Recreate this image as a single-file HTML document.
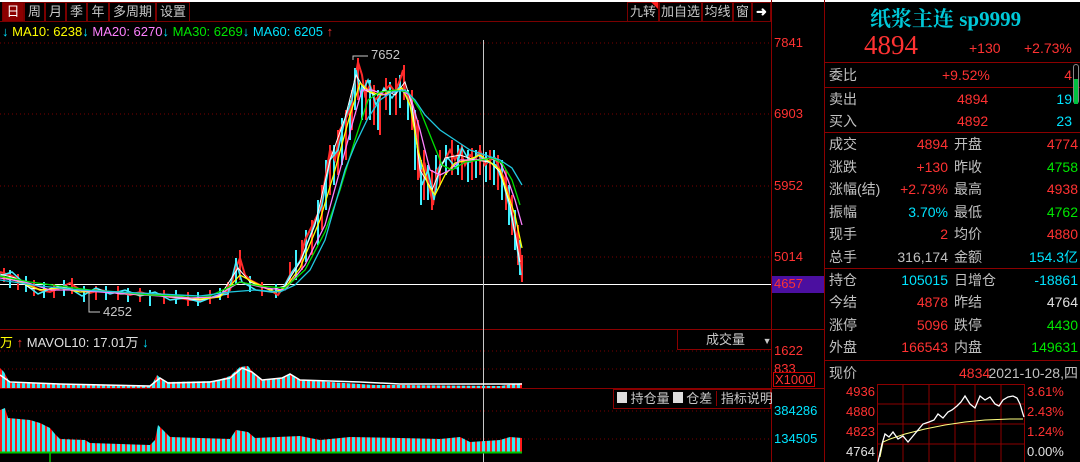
<!DOCTYPE html>
<html><head><meta charset="utf-8"><style>
*{margin:0;padding:0;box-sizing:border-box}
body{width:1080px;height:462px;background:#000;overflow:hidden;position:relative;font-family:"Liberation Sans","Noto Sans CJK SC",sans-serif;font-size:13px;color:#c0c0c0}
.a{position:absolute;white-space:nowrap}
.r{color:#ff3232}.c{color:#00e4ff}.g{color:#00e600}.w{color:#e0e0e0}.y{color:#ffff00}.m{color:#ff80ff}
.tb{position:absolute;top:2px;height:20px;border:1px solid #7a0000;color:#c8c8c8;font-size:13px;line-height:18px;text-align:center}
.row{position:absolute;left:829px;width:249px;height:22px;line-height:22px;font-size:14px}
.row span{position:absolute}
</style></head><body>
<div class="a" style="left:0;top:0;width:1080px;height:2px;background:#fff"></div>
<div class="tb" style="left:2px;width:22px;background:#8b0000;color:#fff">日</div>
<div class="tb" style="left:24px;width:21px">周</div>
<div class="tb" style="left:45px;width:21px">月</div>
<div class="tb" style="left:66px;width:21px">季</div>
<div class="tb" style="left:87px;width:22px">年</div>
<div class="tb" style="left:109px;width:47px">多周期</div>
<div class="tb" style="left:156px;width:34px">设置</div>
<div class="tb" style="left:627px;width:32px">九转</div>
<div class="a" style="left:651px;top:2px;width:0;height:0;border-left:7px solid transparent;border-top:7px solid #ff2020"></div>
<div class="tb" style="left:659px;width:43px">加自选</div>
<div class="tb" style="left:702px;width:31px">均线</div>
<div class="tb" style="left:733px;width:19px">窗</div>
<div class="tb" style="left:752px;width:19px;font-weight:bold;color:#fff">➜</div>
<div class="a" style="left:0;top:21px;width:771px;height:1px;background:#7a0000"></div>
<div class="a" style="left:2px;top:24px;font-size:13px"><span class="c">↓</span> <span class="y">MA10: 6238</span><span class="c">↓</span> <span class="m">MA20: 6270</span><span class="c">↓</span> <span class="g">MA30: 6269</span><span class="c">↓</span> <span class="c">MA60: 6205</span> <span class="r">↑</span></div>
<div class="a" style="left:771px;top:0;width:1px;height:462px;background:#8b0000"></div>
<div class="a" style="left:824px;top:0;width:1px;height:462px;background:#8b0000"></div>
<svg class="a" style="left:0;top:0" width="825" height="462">
<defs><pattern id="st" width="5" height="10" patternUnits="userSpaceOnUse"><rect width="2" height="10" fill="#ff1a1a"/><rect x="2" width="3" height="10" fill="#38e8f0"/></pattern></defs>
<g stroke="#7a0000" stroke-dasharray="1,3">
<line x1="0" y1="43" x2="771" y2="43"/><line x1="0" y1="114" x2="771" y2="114"/><line x1="0" y1="186" x2="771" y2="186"/><line x1="0" y1="257" x2="771" y2="257"/>
<line x1="0" y1="351" x2="771" y2="351"/><line x1="0" y1="369" x2="771" y2="369"/><line x1="0" y1="411" x2="771" y2="411"/><line x1="0" y1="439" x2="771" y2="439"/>
</g>
<line x1="0" y1="329.5" x2="825" y2="329.5" stroke="#8b0000"/>
<line x1="0" y1="388.5" x2="825" y2="388.5" stroke="#8b0000"/>
<line x1="0" y1="284.5" x2="771" y2="284.5" stroke="#fff"/>
<line x1="483.5" y1="40" x2="483.5" y2="462" stroke="#c8c8c8"/>
<!-- candle wicks -->
<path stroke="#ff2a2a" stroke-width="2" d="M4 268V282M18 274V290M34 280V296M54 284V298M72 278V294M96 286V300M118 286V300M140 288V302M164 290V304M188 292V306M210 290V304M228 282V298M240 250V280M262 282V296M290 262V284M302 240V270M312 220V255M322 185V230M330 145V195M338 130V175M346 110V160M352 90V130M358 58V100M366 80V120M374 85V125M380 95V135M386 78V110M396 78V115M404 65V100M412 90V130M418 120V180M424 150V200M432 170V210M440 150V185M452 140V175M462 145V180M472 148V180M480 145V175M490 150V180M498 155V190M506 170V210M512 195V235M518 225V265M522 255V282"/>
<path stroke="#40f0ff" stroke-width="2" d="M10 270V288M26 276V292M44 282V298M64 280V296M84 286V302M106 286V300M128 288V302M150 290V306M176 290V304M198 292V306M220 288V300M236 258V284M250 276V292M276 284V298M296 250V280M306 230V262M318 200V245M326 160V210M334 145V185M342 118V165M350 100V140M355 68V110M362 85V120M370 80V120M378 90V130M390 82V115M400 75V108M408 90V120M415 110V170M421 160V205M428 165V200M436 155V190M446 145V175M458 145V175M468 150V182M476 150V178M486 152V182M494 150V185M502 160V200M509 185V225M515 210V250M520 240V275"/>
<polyline fill="none" stroke="#ff2a2a" stroke-width="2" points="0,272 10,275 20,280 30,285 40,290 50,292 60,288 70,283 80,290 90,293 100,290 110,292 120,292 130,295 140,292 150,295 160,294 170,297 180,298 190,300 200,300 210,298 220,296 230,290 235,270 240,258 245,275 250,280 260,285 270,290 278,295 285,285 290,275 300,262 305,240 310,230 320,210 325,180 330,150 335,160 340,130 345,120 350,110 355,80 358,62 362,75 365,95 370,85 375,100 380,95 385,90 390,85 395,92 400,80 403,70 405,90 410,100 415,120 418,140 420,175 425,165 430,190 433,205 437,170 445,160 450,150 455,160 460,150 465,165 470,155 475,160 480,150 485,165 490,160 495,158 500,170 505,180 510,200 515,230 520,250 522,280"/>
<polyline fill="none" stroke="#40f0ff" stroke-width="1.5" points="0,276 12,272 25,284 38,294 52,288 66,286 82,296 96,288 110,294 125,290 140,296 155,292 170,300 185,298 200,302 215,296 228,294 236,262 242,282 256,290 272,292 282,290 292,272 302,258 310,236 322,205 330,160 338,150 346,115 352,100 356,70 361,95 368,80 376,105 384,88 392,98 400,86 406,96 412,110 418,150 422,185 428,170 434,200 440,165 448,158 456,168 462,148 470,162 478,155 488,162 496,165 504,185 510,210 516,240 521,275"/>
<polyline fill="none" stroke="#fff" stroke-width="1" points="0,274 15,278 30,288 45,290 60,286 80,292 100,290 120,294 140,294 160,296 180,298 200,300 220,296 238,268 250,282 270,290 285,286 300,262 315,225 330,160 345,118 356,75 365,90 375,95 385,90 395,95 405,82 412,105 420,170 432,190 445,158 460,155 475,160 490,162 500,172 510,205 520,262"/>
<polyline fill="none" stroke="#ffff00" stroke-width="1.3" points="0,276 20,282 40,290 60,288 80,292 100,291 120,293 140,295 160,295 180,297 200,299 220,297 240,275 255,283 275,292 285,288 300,268 320,220 335,170 350,115 360,83 370,92 382,95 392,92 402,88 410,105 418,150 428,185 435,195 445,175 455,163 468,160 480,155 490,162 500,170 508,195 515,215 522,248"/>
<polyline fill="none" stroke="#ff80ff" stroke-width="1.3" points="0,278 25,282 50,290 75,290 100,292 130,294 160,296 190,298 215,297 240,282 265,288 285,290 305,265 325,225 340,170 352,125 362,90 372,90 385,95 400,90 410,95 420,130 430,170 440,175 450,170 460,160 475,160 490,158 500,162 508,180 515,200 522,225"/>
<polyline fill="none" stroke="#00e000" stroke-width="1.3" points="0,276 30,282 60,286 90,290 120,292 150,295 180,296 210,296 240,282 260,286 285,288 305,270 325,232 340,190 355,140 368,100 380,92 395,90 408,92 420,110 432,140 442,165 452,170 465,162 480,160 492,158 502,163 512,180 520,205"/>
<polyline fill="none" stroke="#20c8e0" stroke-width="1.3" points="0,280 40,286 80,290 120,292 160,294 200,296 230,292 255,290 280,292 295,285 310,270 325,240 335,205 345,170 355,145 368,118 380,100 392,92 405,90 415,100 425,115 440,130 455,140 470,150 485,155 500,160 512,168 522,185"/>
<polyline fill="none" stroke="#c8c8c8" points="353,60 353,56 368,56"/>
<polyline fill="none" stroke="#c8c8c8" points="89,292 89,312 100,312"/>
<!-- volume -->
<polygon fill="url(#st)" points="0,368 4,372 10,383 60,384 150,386 200,385 300,385 400,385 500,386 522,383 522,388 0,388"/>
<polygon fill="url(#st)" points="150,388 157,375 165,382 215,381 230,376 240,367 248,366 256,376 262,380 280,378 290,374 300,380 390,386 400,388"/>
<polyline fill="none" stroke="#fff" stroke-width="1.5" points="0,375 10,382 60,384 150,386 160,378 168,383 210,382 230,378 242,368 252,372 262,380 282,378 290,374 300,380 330,381 360,382 400,384 522,384"/>
<!-- OI -->
<polygon fill="url(#st)" points="0,452 0,410 5,408 8,418 30,420 40,423 50,428 55,434 60,439 85,440 90,443 150,445 155,440 158,425 163,430 170,437 230,439 236,430 248,432 255,438 300,436 320,440 350,437 400,438 440,439 460,437 470,442 500,440 510,437 522,438 522,452"/>
<line x1="0" y1="452.5" x2="522" y2="452.5" stroke="#00c800" stroke-width="2"/>
<line x1="50" y1="453" x2="50" y2="462" stroke="#00c800" stroke-width="1.5"/>
</svg>
<div class="a" style="left:371px;top:47px;font-size:13px;color:#c8c8c8">7652</div>
<div class="a" style="left:103px;top:304px;font-size:13px;color:#c8c8c8">4252</div>
<div class="a" style="left:0;top:332px;font-size:13px"><span class="y">万</span> <span class="r">↑</span> <span class="w">MAVOL10: 17.01万</span> <span class="c">↓</span></div>
<div class="a" style="left:677px;top:330px;width:94px;height:20px;border-left:1px solid #8b0000;border-bottom:1px solid #8b0000;color:#c8c8c8;line-height:20px;padding-left:28px">成交量 <span style="font-size:9px;margin-left:14px">▼</span></div>
<div class="a" style="left:613px;top:389px;width:158px;height:20px;border:1px solid #8b0000;line-height:18px;color:#c8c8c8"><span style="display:inline-block;width:10px;height:11px;background:#ddd;margin-left:3px"></span> 持仓量<span style="display:inline-block;width:10px;height:11px;background:#ddd;margin-left:3px"></span> 仓差 <span style="border-left:1px solid #8b0000;padding-left:4px">指标说明</span></div>
<div class="a r" style="left:774px;top:35px">7841</div>
<div class="a r" style="left:774px;top:106px">6903</div>
<div class="a r" style="left:774px;top:178px">5952</div>
<div class="a r" style="left:774px;top:249px">5014</div>
<div class="a r" style="left:772px;top:276px;width:52px;height:17px;background:#4b0fa0;padding-left:2px">4657</div>
<div class="a r" style="left:774px;top:343px">1622</div>
<div class="a r" style="left:774px;top:361px">833</div>
<div class="a r" style="left:773px;top:372px;border:1px solid #c00;padding:0 1px;line-height:13px">X1000</div>
<div class="a c" style="left:774px;top:403px">384286</div>
<div class="a c" style="left:774px;top:431px">134505</div>
<div class="a" style="left:870px;top:3px;font-family:'Liberation Serif','Noto Serif CJK SC',serif;font-size:21px;font-weight:bold;color:#00c8d8">纸浆主连 sp9999</div>
<div class="a r" style="left:864px;top:30px;font-family:'Liberation Serif',serif;font-size:27px">4894</div>
<div class="a r" style="left:969px;top:40px;font-size:14px">+130</div>
<div class="a r" style="left:1024px;top:40px;font-size:14px">+2.73%</div>
<div class="a" style="left:825px;top:62px;width:255px;height:1px;background:#8b0000"></div>
<div class="a" style="left:825px;top:87px;width:255px;height:1px;background:#8b0000"></div>
<div class="a" style="left:825px;top:132px;width:255px;height:1px;background:#8b0000"></div>
<div class="a" style="left:825px;top:268px;width:255px;height:1px;background:#8b0000"></div>
<div class="a" style="left:825px;top:360px;width:255px;height:1px;background:#8b0000"></div>
<div class="a" style="left:1073px;top:64px;width:6px;height:40px;border:1px solid #888;border-radius:3px"></div>
<div class="a" style="left:1074px;top:79px;width:4px;height:25px;background:#00c040"></div>
<div class="row" style="top:64px"><span>委比</span><span class="r" style="left:113px">+9.52%</span><span class="r" style="right:6px">4</span></div>
<div class="row" style="top:88px"><span>卖出</span><span class="r" style="left:128px">4894</span><span class="c" style="right:6px">19</span></div>
<div class="row" style="top:110px"><span>买入</span><span class="r" style="left:128px">4892</span><span class="c" style="right:6px">23</span></div>
<div class="row" style="top:133px"><span>成交</span><span class="r" style="right:130px">4894</span><span style="left:125px">开盘</span><span class="r" style="right:0">4774</span></div>
<div class="row" style="top:156px"><span>涨跌</span><span class="r" style="right:130px">+130</span><span style="left:125px">昨收</span><span class="g" style="right:0">4758</span></div>
<div class="row" style="top:178px"><span>涨幅(结)</span><span class="r" style="right:130px">+2.73%</span><span style="left:125px">最高</span><span class="r" style="right:0">4938</span></div>
<div class="row" style="top:201px"><span>振幅</span><span class="c" style="right:130px">3.70%</span><span style="left:125px">最低</span><span class="g" style="right:0">4762</span></div>
<div class="row" style="top:223px"><span>现手</span><span class="r" style="right:130px">2</span><span style="left:125px">均价</span><span class="r" style="right:0">4880</span></div>
<div class="row" style="top:246px"><span>总手</span><span style="right:130px">316,174</span><span style="left:125px">金额</span><span class="c" style="right:0">154.3亿</span></div>
<div class="row" style="top:269px"><span>持仓</span><span class="c" style="right:130px">105015</span><span style="left:125px">日增仓</span><span class="c" style="right:0">-18861</span></div>
<div class="row" style="top:291px"><span>今结</span><span class="r" style="right:130px">4878</span><span style="left:125px">昨结</span><span class="w" style="right:0">4764</span></div>
<div class="row" style="top:314px"><span>涨停</span><span class="r" style="right:130px">5096</span><span style="left:125px">跌停</span><span class="g" style="right:0">4430</span></div>
<div class="row" style="top:336px"><span>外盘</span><span class="r" style="right:130px">166543</span><span style="left:125px">内盘</span><span class="g" style="right:0">149631</span></div>
<div class="row" style="top:362px"><span>现价</span><span class="r" style="left:130px">4834</span><span style="right:0">2021-10-28,四</span></div>
<svg class="a" style="left:825px;top:384px" width="255" height="78">
<rect x="52.5" y="0.5" width="147" height="80" fill="none" stroke="#8b0000"/>
<g stroke="#8b0000"><line x1="52" y1="20" x2="200" y2="20"/><line x1="52" y1="40" x2="200" y2="40"/><line x1="52" y1="60" x2="200" y2="60"/>
<line x1="78" y1="0" x2="78" y2="78"/><line x1="104" y1="0" x2="104" y2="78"/><line x1="130" y1="0" x2="130" y2="78"/><line x1="150" y1="0" x2="150" y2="78"/><line x1="176" y1="0" x2="176" y2="78"/></g>
<polyline fill="none" stroke="#ffff80" points="55,73 58,58 65,55 80,50 100,45 120,41 140,38 160,36 185,35 198,35"/>
<polyline fill="none" stroke="#fff" stroke-width="1.3" points="53,78 57,60 60,50 64,53 68,48 73,55 78,52 83,58 88,52 93,46 98,40 104,38 109,36 113,30 118,34 123,28 127,26 132,22 136,18 140,12 145,20 150,24 155,12 160,16 165,13 170,20 174,22 178,16 183,13 188,12 192,14 195,20 198,30 199,33"/>
</svg>
<div class="a r" style="left:846px;top:384px">4936</div>
<div class="a r" style="left:846px;top:404px">4880</div>
<div class="a r" style="left:846px;top:424px">4823</div>
<div class="a w" style="left:846px;top:444px">4764</div>
<div class="a r" style="left:1027px;top:384px">3.61%</div>
<div class="a r" style="left:1027px;top:404px">2.43%</div>
<div class="a r" style="left:1027px;top:424px">1.24%</div>
<div class="a w" style="left:1027px;top:444px">0.00%</div>
</body></html>
